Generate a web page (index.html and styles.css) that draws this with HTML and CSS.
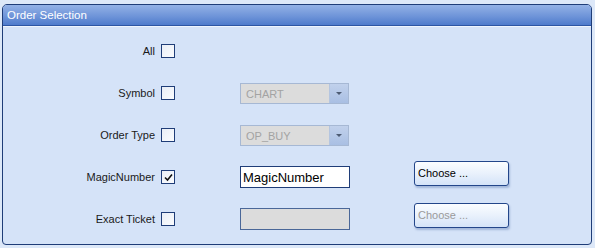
FILE: index.html
```html
<!DOCTYPE html>
<html lang="en">
<head>
  <meta charset="UTF-8" />
  <title>Order Selection</title>
  <link rel="stylesheet" href="styles.css">
</head>
<body>
  <div class="panel">
    <div class="panel-header">Order Selection</div>
    <div class="panel-body">
      <!-- row: All -->
      <div class="label">All</div>
      <div class="cell"><span class="check"></span></div>
      <div class="cell"></div>
      <div class="cell"></div>

      <!-- row: Symbol -->
      <div class="label">Symbol</div>
      <div class="cell"><span class="check"></span></div>
      <div class="cell">
        <div class="combo">
          <span class="combo-text">CHART</span>
          <span class="combo-arrow"></span>
        </div>
      </div>
      <div class="cell"></div>

      <!-- row: Order Type -->
      <div class="label">Order Type</div>
      <div class="cell"><span class="check"></span></div>
      <div class="cell">
        <div class="combo">
          <span class="combo-text">OP_BUY</span>
          <span class="combo-arrow"></span>
        </div>
      </div>
      <div class="cell"></div>

      <!-- row: MagicNumber -->
      <div class="label">MagicNumber</div>
      <div class="cell">
        <span class="check checked">
          <svg width="11" height="11" viewBox="0 0 11 11"><path d="M2 5.5 L4.5 8 L9 2.5" fill="none" stroke="#111" stroke-width="1.6"/></svg>
        </span>
      </div>
      <div class="cell"><div class="textbox">MagicNumber</div></div>
      <div class="cell"><div class="btn">Choose ...</div></div>

      <!-- row: Exact Ticket -->
      <div class="label">Exact Ticket</div>
      <div class="cell"><span class="check"></span></div>
      <div class="cell"><div class="textbox disabled"></div></div>
      <div class="cell"><div class="btn disabled">Choose ...</div></div>
    </div>
  </div>
</body>
</html>
```

FILE: styles.css
```css
body {
  margin: 0;
  background: #dde8f8;
  font-family: "Liberation Sans", Arial, sans-serif;
  font-size: 11px;
  color: #1a1a1a;
}
.panel {
  margin: 4px 0 0 2px;
  width: 590px;
  height: 241px;
  box-sizing: border-box;
  border: 1px solid #1f3d78;
  border-radius: 5px 5px 4px 4px;
  background: #d5e3f8;
  overflow: hidden;
  display: flex;
  flex-direction: column;
}
.panel-header {
  height: 21px;
  flex: none;
  box-sizing: border-box;
  padding: 4px 0 0 4px;
  background: linear-gradient(#93b1e6, #6f95d9 55%, #4f7bcc);
  border-bottom: 1px solid #2d55a3;
  color: #fff;
  font-size: 11.5px;
}
.panel-body {
  flex: 1;
  border-top: 1px solid #eef4fd;
  padding-top: 3px;
  display: grid;
  grid-template-columns: 152px 85px 174px 95px;
  grid-auto-rows: 42px;
}
.label {
  display: flex;
  align-items: center;
  justify-content: flex-end;
}
.cell {
  display: flex;
  align-items: center;
}
.check {
  margin-left: 6px;
  width: 14px;
  height: 14px;
  box-sizing: border-box;
  border: 1px solid #1f3d78;
  background: linear-gradient(135deg, #e9eef6, #fbfcfe);
  display: flex;
  align-items: center;
  justify-content: center;
}
.combo {
  width: 109px;
  height: 21px;
  box-sizing: border-box;
  border: 1px solid #a6b8d4;
  background: #dcdcdc;
  display: flex;
}
.combo-text {
  flex: 1;
  padding: 4px 0 0 5px;
  color: #a3a3a3;
}
.combo-arrow {
  width: 18px;
  background: linear-gradient(#c1d1ec, #a9bfe3);
  border-left: 1px solid #b4c5e0;
  position: relative;
}
.combo-arrow::after {
  content: "";
  position: absolute;
  left: 6px;
  top: 8px;
  border-left: 3px solid transparent;
  border-right: 3px solid transparent;
  border-top: 3px solid #4d5b73;
}
.textbox {
  width: 110px;
  height: 22px;
  box-sizing: border-box;
  border: 1px solid #1f3d78;
  background: #fff;
  padding: 3px 0 0 2px;
  font-size: 13px;
  color: #000;
}
.textbox.disabled {
  background: #dcdcdc;
  border-color: #4a6798;
}
.btn {
  width: 95px;
  height: 25px;
  box-sizing: border-box;
  margin-bottom: 8px;
  border: 1px solid #23468a;
  border-radius: 3px;
  background: linear-gradient(#fbfdff, #e9f1fc 50%, #d4e3f8);
  box-shadow: 1px 2px 2px rgba(70, 100, 160, 0.35);
  padding: 5px 0 0 3px;
  color: #000;
}
.btn.disabled {
  color: #9a9a9a;
}
```
